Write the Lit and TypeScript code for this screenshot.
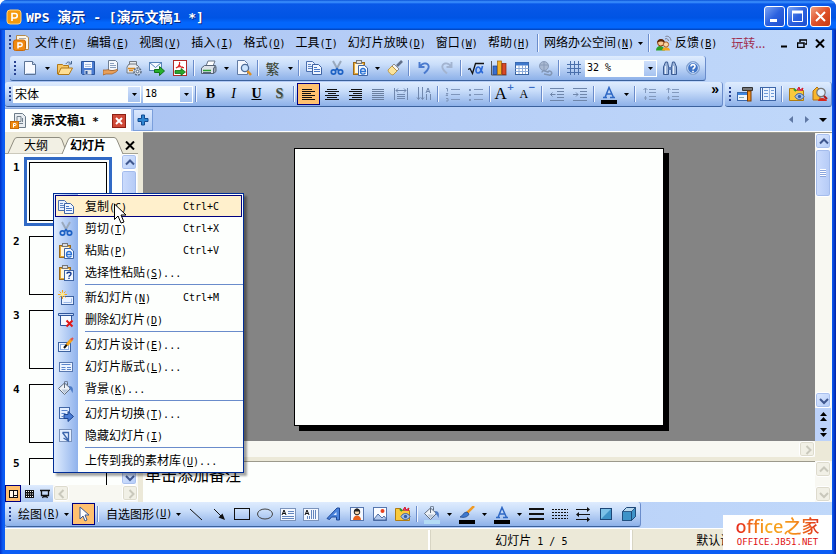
import { LitElement, html, css, svg, nothing, TemplateResult } from "lit";
import { customElement } from "lit/decorators.js";
import { classMap } from "lit/directives/class-map.js";

const lines = (d: string, color = "#111", w = 1) =>
  svg`<path d=${d} stroke=${color} stroke-width=${w} fill="none"/>`;

const board = svg`<rect x="1.500" y="2.500" width="11" height="12" fill="#e3a93c" stroke="#9a6a1c"/>
  <rect x="4.500" y=".5" width="5" height="3" fill="#ddd" stroke="#777"/>
  <rect x="3" y="4" width="8" height="9" fill="#fff6dc"/>`;

const icons: Record<string, TemplateResult> = {
  app: svg`<rect x="1" y="1" width="14" height="14" rx="3" fill="#f59a0c" stroke="#ffd27a"/><path d="M6 12V4.500h3a2.200 2.200 0 0 1 0 4.500H6" fill="none" stroke="#fff" stroke-width="1.600"/>`,
  doc: svg`<path d="M3.500.5h9l3 2v12h-12z" fill="#fdf7ea" stroke="#b48a4a"/><path d="M6 3.500h7" stroke="#aaa"/><rect x=".5" y="5" width="12" height="10.500" rx="2" fill="#f08a10" stroke="#c86a08"/><path d="M5 13.500V8h2.500a1.700 1.700 0 0 1 0 3.400H5" fill="none" stroke="#fff" stroke-width="1.500"/>`,
  docgray: svg`<path d="M4.500.5h8l3 3v11h-11z" fill="#e9eef2" stroke="#6d7c88"/><path d="M7 3.500h4v5H7zM7 10.500h6M12.500 5v4" stroke="#74828d" fill="none"/><rect x=".5" y="8.500" width="8" height="7" fill="#f08a10" stroke="#c86a08"/><path d="M3.500 14.500v-4H5a1 1 0 0 1 0 2H4" fill="none" stroke="#fff"/>`,
  new: svg`<path d="M2.500 1.500h8l3 3v10h-11z" fill="#f7faff" stroke="#5c7496"/><path d="M10.500 1.500v3h3" fill="#cddcf0" stroke="#5c7496"/><path d="M4 13.500h9" stroke="#b8cce8"/>`,
  open: svg`<path d="M.5 14v-9.500h5l1 1h5v3" fill="#f7c766" stroke="#b07818"/><path d="M1 14.500l3-6.500h11.500L12 14.500z" fill="#ffdf94" stroke="#b07818"/><path d="M9 4c1-2.500 3.500-2.500 5-.5M14.500 1v3h-3" fill="none" stroke="#47658f"/>`,
  save: svg`<path d="M1.500 1.500h13v13h-12l-1-1z" fill="#4a7bd0" stroke="#2b559c"/><rect x="4" y="2" width="8" height="6" fill="#f4f8ff"/><path d="M5 4.500h6M5 6.500h6" stroke="#a9bddc"/><rect x="4.500" y="10" width="7" height="4.500" fill="#d5deeb"/><rect x="5.500" y="11" width="2" height="3" fill="#2b559c"/>`,
  hand: svg`<path d="M5.500.5h7l2 2v8h-9z" fill="#f5f8fc" stroke="#6d7e94"/><path d="M7 3.500h4M7 5.500h6M7 7.500h6" stroke="#8ba0bd"/><path d="M0 10h3c3-1 4 1 7 .5l4-1c1 .5 0 2-1 2.500l-4 2H3l-3 1z" fill="#e8a05c" stroke="#a05a1c" stroke-width=".7"/>`,
  gearbox: svg`<path d="M3.500 4.500V1.500h7v4M1 13V7l2-3h7l3 3v6z" fill="#e8ebee" stroke="#727a84"/><path d="M2 8.500h7M3 10.500h4" stroke="#d9891e" stroke-width="1.500"/><circle cx="11.500" cy="11.500" r="3.500" fill="#c9d4e2" stroke="#5b6c84" stroke-width="1.500" stroke-dasharray="2 1"/><circle cx="11.500" cy="11.500" r="1.300" fill="#fff" stroke="#5b6c84"/>`,
  mail: svg`<rect x=".5" y="2.500" width="12" height="8" fill="#f5faff" stroke="#5683b8"/><path d="M.5 2.500l6 5 6-5" fill="none" stroke="#5683b8"/><path d="M5.500 9.500h5V6.500l5 4.500-5 4.500v-3h-5z" fill="#27b02c" stroke="#127218"/>`,
  pdf: svg`<rect x="1.500" y=".5" width="13" height="15" fill="#fff" stroke="#b02a2a"/><path d="M4 8c3-1 4-4 3.500-6M7 4c1 3 3 4 5 3.500M4 8c1-1 4-1.500 7-1" fill="none" stroke="#d22" stroke-width="1.200"/><path d="M3 10.500h6v-2l4.500 3.500L9 15.500v-2H3z" fill="#2aa52e" stroke="#0f6e15" stroke-width=".8"/>`,
  printer: svg`<path d="M5 6l2-5h7l-2 5" fill="#fff" stroke="#68768a"/><path d="M.5 8l3-2.500h11l-2 3v5H.5z" fill="#dde3ea" stroke="#566478"/><path d="M12.500 8.500l2.500-2v5l-2.500 2z" fill="#9faab8" stroke="#566478"/><path d="M2 10.500h8" stroke="#28a030" stroke-width="1.600"/><path d="M2 12.500h8" stroke="#566478"/>`,
  preview: svg`<path d="M1.500.5h7l3 3v11h-10z" fill="#f4f8ff" stroke="#617ba4"/><circle cx="9" cy="8" r="3.600" fill="#cbe4ff" stroke="#4c6b98" stroke-width="1.300"/><path d="M11.500 11l3.500 4" stroke="#e09020" stroke-width="2.500"/>`,
  copy: svg`<path d="M.5 1.500h6l2 2v8h-8z" fill="#e9f1ff" stroke="#4a6fae"/><path d="M2 4.500h3M2 6.500h4M2 8.500h4" stroke="#5f86c4"/><path d="M6.500 4.500h6l3 3v7h-9z" fill="#f0f6ff" stroke="#3e63a3"/><path d="M8 7.500h3M8 9.500h6M8 11.500h6" stroke="#4878c8"/>`,
  cut: svg`<path d="M4 1l5 9M12 1L7 10" stroke="#9aa9bd" stroke-width="2" fill="none"/><circle cx="4.500" cy="12" r="2.200" fill="none" stroke="#1e62c4" stroke-width="1.700"/><circle cx="11.500" cy="12" r="2.200" fill="none" stroke="#1e62c4" stroke-width="1.700"/><path d="M6.500 10.500l1.500-2 1.500 2" stroke="#1e62c4" stroke-width="1.500" fill="none"/>`,
  paste: svg`${board}<path d="M6.500 5.500h6l3 2.500v7.500h-9z" fill="#f4f9ff" stroke="#3f65a5"/><path d="M8.500 11.500h5c0-4-5-4-5 0s4 2.500 5 1.500" fill="none" stroke="#2b72d4" stroke-width="1.300"/>`,
  pasteq: svg`${board}<rect x="6.500" y="5.500" width="9" height="10" fill="#f4f9ff" stroke="#3f65a5"/><path d="M9 8.800c0-2 4-2 4 0s-2 1.500-2 3M11 12.800v1.200" fill="none" stroke="#153a90" stroke-width="1.400"/>`,
  brush: svg`<path d="M15 1l-5 5" stroke="#61708a" stroke-width="2.600"/><path d="M7 4l5 5-2 2-5-5z" fill="#f3f3f3" stroke="#777" stroke-width=".8"/><path d="M5 6l5 5-4 4c-2 0-5-3-5-5z" fill="#fbe39a" stroke="#b58a30" stroke-width=".8"/>`,
  undo: svg`<path d="M3.500 2v5h5M4 6.500C7 1.500 14 3 12.500 8c-.7 2.500-3 4-4.500 5.500" fill="none" stroke="#4a7ace" stroke-width="1.900"/>`,
  redo: svg`<path d="M12.500 2v5h-5M12 6.500C9 1.500 2 3 3.500 8c.7 2.500 3 4 4.500 5.500" fill="none" stroke="#a3b4d0" stroke-width="1.900"/>`,
  root: svg`<path d="M0 9.500l2-1 2.500 5L7.500 3.500H16" fill="none" stroke="#111" stroke-width="1.300"/><path d="M14.500 6c-1 5-2.500 7-4.500 7-3 0-2.500-6 .5-6 2 0 2.500 5 4.500 6" fill="none" stroke="#2a68d8" stroke-width="1.600"/>`,
  chart: svg`<path d="M.5 1v14H15.500" fill="none" stroke="#555"/><rect x="2" y="6" width="4" height="8.500" fill="#3a70d0" stroke="#1d3f86" stroke-width=".7"/><rect x="6.500" y="1" width="4" height="13.500" fill="#f5b024" stroke="#9a6208" stroke-width=".7"/><rect x="11" y="3.500" width="4" height="11" fill="#d84a28" stroke="#8a2008" stroke-width=".7"/>`,
  table: svg`<rect x="1.500" y="2.500" width="13" height="12" fill="#fff" stroke="#37619f"/><path d="M1.500 4h13" stroke="#3e78cc" stroke-width="3"/><path d="M1.500 8.500h13M1.500 11.500h13M5 5v9M8.500 5v9M11.500 5v9" stroke="#8dacda"/>`,
  link: svg`<circle cx="7" cy="6" r="4.500" fill="#a9b9d2" stroke="#8a9cb9"/><path d="M3 5h8M7 2v8" stroke="#8a9cb9"/><path d="M5 12.500a2 2 0 0 1 3-1.500l3 1a2 2 0 1 1 1 3l-5-1" fill="none" stroke="#8296b5" stroke-width="1.500"/>`,
  grid: lines("M4.500 1v14M8.500 1v14M12.500 1v14M1 4.500h14M1 8.500h14M1 12.500h14", "#4a70ac"),
  find: svg`<path d="M1.500 7l2-5h2l1 5v7.500h-5zM14.500 7l-2-5h-2l-1 5v7.500h5z" fill="#9cb4d8" stroke="#3a5a92"/><path d="M6.500 7h3v3h-3z" fill="#5f80b8"/><path d="M3.500 6v8M11.500 6v8" stroke="#e4eefc"/>`,
  help: svg`<circle cx="8" cy="8" r="6.500" fill="#3f74c6" stroke="#8fa9d0"/><circle cx="8" cy="8" r="5.400" fill="none" stroke="#d3e4fb"/><path d="M6 6.500c0-2.500 4-2.500 4 0 0 1.500-2 1.500-2 3M8 10.800v1.400" fill="none" stroke="#fff" stroke-width="1.600"/>`,
  left: lines("M1 3.500h10M1 5.500h13M1 7.500h9M1 9.500h13M1 11.500h10M1 13.500h13"),
  center: lines("M3 3.500h10M1 5.500h14M4 7.500h8M1 9.500h14M3 11.500h10M1 13.500h14"),
  right: lines("M4 3.500h11M2 5.500h13M6 7.500h9M2 9.500h13M5 11.500h10M2 13.500h13"),
  justify: lines("M2 3.500h12M2 5.500h12M2 7.500h12M2 9.500h12M2 11.500h12M2 13.500h12", "#6a7f9f"),
  spread: lines("M1.500 2v12M14.500 2v12M3 4.500h10M5 2.500l-2 2 2 2M11 2.500l2 2-2 2M4 8.500h8M4 10.500h8M4 12.500h8", "#7188ae"),
  vert: lines("M2.500 1v12M6.500 1v12M1 11.500l1.500 2 1.500-2M5 11.500l1.500 2 1.500-2M10.500 8v6M14.500 8v6M10 7l2-5 2 5M11 5.500h2", "#7188ae"),
  numbers: lines("M6 3.500h9M6 8.500h9M6 13.500h9M1 2.500h1.500v3M1 7.500h2l-2 2h2M1 12.500h2v2.500h-2", "#7f96bb"),
  bullets: svg`${lines("M6 3.500h9M6 8.500h9M6 13.500h9", "#7f96bb")}<path d="M1 3h2v2H1zM1 8h2v2H1zM1 13h2v2H1z" fill="#7f96bb"/>`,
  outdent: lines("M1 2.500h14M8 5.500h7M8 8.500h7M8 11.500h7M1 14.500h14M1.500 8.500h5M3.500 6.500l-2 2 2 2", "#6f86aa"),
  indent: lines("M1 2.500h14M8 5.500h7M8 8.500h7M8 11.500h7M1 14.500h14M1 8.500h5M4 6.500l2 2-2 2", "#6f86aa"),
  spacing: lines("M7 3.500h7M7 6.500h7M7 10.500h7M7 13.500h7M3.500 2v5M1.500 4l2-2 2 2M3.500 14v-4M2 12h3", "#8299bd"),
  hammer: svg`<rect x=".5" y="6.500" width="11" height="8" fill="#eef5ff" stroke="#3a68ac"/><path d="M1 8h10" stroke="#3e86e0" stroke-width="2"/><path d="M2 11.500h5" stroke="#8aa"/><path d="M5.500 1.500h10v3h-10z" fill="#777" stroke="#333"/><rect x="10.500" y="5" width="3.500" height="10" fill="#f0901c" stroke="#7a3c04"/>`,
  pane: svg`<rect x=".5" y="1.500" width="15" height="13" fill="#eaf3ff" stroke="#3d66a8"/><path d="M2.500 2v12" stroke="#3d66a8"/><path d="M9.500 2v12" stroke="#9ab7e2"/><path d="M4 4.500h4M4 7.500h4M4 10.500h4M11 4.500h3M11 7.500h3M11 10.500h3" stroke="#6f9bd8"/>`,
  gallery: svg`<path d="M.5 14.500v-12h5l1 2h8v10z" fill="#f9ca3c" stroke="#b07c10"/><path d="M8 4l2-3 1 3 3-2-1 3" fill="#e22c9a" stroke="#d42020"/><path d="M5 3l2 2" stroke="#2a9a2a" stroke-width="2"/><path d="M6 10.500c2-4 7-4 9 0-2 4-7 4-9 0z" fill="#a8c4ea" stroke="#3c62a2"/><circle cx="10.500" cy="10.500" r="1.700" fill="#315da6"/>`,
  user: svg`<path d="M1 14V5l4-4 3 3v10z" fill="#f9b62c" stroke="#b07010"/><path d="M6 15c0-4 8-4 9 0z" fill="#d8281c"/><circle cx="9" cy="6.500" r="4.200" fill="#dcedff" stroke="#777" stroke-width="1.200"/><path d="M12 10l3 3" stroke="#b01818" stroke-width="2"/>`,
  people: svg`<path d="M0 15.500c0-6 8-6 9 0z" fill="#2ba02a"/><circle cx="4.800" cy="7.800" r="3.200" fill="#f9c890" stroke="#8a3c10"/><path d="M1 8c0-5.500 8-5.500 8 0-2-2-6-2-8 0z" fill="#5a2408"/><path d="M6 15.500c0-4.500 8-4.500 8 0z" fill="#f5a51c"/><circle cx="10" cy="9.500" r="2.600" fill="#fbd5a4" stroke="#a86028"/><path d="M9 4c2-1 3 0 3.500 2M9.500 1.500c3-1 5 1 5.500 4" fill="none" stroke="#778"/>`,
  newslide: svg`<rect x="3.500" y="6.500" width="12" height="8" fill="#eaf2ff" stroke="#3d62a0"/><path d="M5.500 12.500h8v-4" fill="none" stroke="#9cb9e8"/><path d="M4.500 0v9M0 4.500h9M1.500 1.500l6 6M7.500 1.500l-6 6" stroke="#f7a51c"/><circle cx="4.500" cy="4.500" r="2" fill="#ffe98a"/>`,
  delslide: svg`<path d="M.5 1.500h15v2H.5z" fill="#c8dcfa" stroke="#2f569c"/><path d="M2.500 3.500v10h8M13.500 3.500v5" fill="none" stroke="#2f569c"/><path d="M3 4h10v9H3z" fill="#f6faff"/><path d="M8.500 8.500l6 6M14.500 8.500l-6 6" stroke="#e01818" stroke-width="2"/>`,
  design: svg`<rect x=".5" y="5.500" width="12" height="9" fill="#eaf2ff" stroke="#3d62a0"/><rect x="2.500" y="7.500" width="8" height="5" fill="#fff" stroke="#8fb0e4"/><path d="M6 11l6-7" stroke="#111" stroke-width="2"/><path d="M9 8l5-6" stroke="#f7a51c" stroke-width="3"/><path d="M13 3l2-2" stroke="#e05050" stroke-width="2"/>`,
  layout: svg`<rect x="1.500" y="3.500" width="13" height="9" fill="#edf4ff" stroke="#5878b0"/><path d="M3.500 5.500h9M3.500 8.500h4M9 8.500h4M3.500 10.500h4M9 10.500h4" stroke="#5c86cc"/>`,
  bucket: svg`<path d="M6.500 2l6 5.500-6 6-6-6z" fill="#eef2f7" stroke="#5f6d80"/><path d="M3.500 8.500h7l-4 4z" fill="#b9c7da"/><path d="M6.500 7V1.500a1.500 1.500 0 0 1 3 0V4" fill="none" stroke="#5f6d80"/><path d="M11 5c4 0 4.500 3 3.500 7-1-1.500-1-3-3-4z" fill="#4c7ac4"/>`,
  transition: svg`<rect x="1.500" y="1.500" width="10" height="11" fill="#e3eeff" stroke="#4166a6"/><path d="M3.500 4.500h6M3.500 7.500h4M3.500 10.500h2" stroke="#5c86cc"/><path d="M6 8.500h4V5.500l5.500 5-5.500 5v-3H6z" fill="#4a7cd4" stroke="#1d448e"/>`,
  hide: svg`<rect x="1.500" y="1.500" width="12" height="12" fill="#e3eeff" stroke="#7b93bb"/><path d="M4.500 4.500h6v6M4.500 4.500l6 8M10.500 5v8l-5-3" fill="none" stroke="#3d66ac" stroke-width="1.300"/>`,
  pointer: svg`<path d="M4 1v12l3-3 2 5 2-1-2-5h4z" fill="#fff" stroke="#3b5992"/>`,
  line: lines("M2 3l12 11"),
  arrow: svg`<path d="M3 3l7 7" stroke="#111"/><path d="M14 14l-6.500-2.500 4-4z" fill="#111"/>`,
  rect: svg`<rect x=".5" y="2.500" width="15" height="11" fill="none" stroke="#111"/>`,
  oval: svg`<ellipse cx="8" cy="8" rx="7.500" ry="5" fill="none" stroke="#444"/>`,
  textbox: svg`<rect x=".5" y="2.500" width="15" height="12" fill="#f4f8ff" stroke="#7b93bb"/><path d="M2 9l2-5 2 5M3 7.500h2" stroke="#111" fill="none"/><path d="M8 5.500h6M8 7.500h6M2 10.500h12M2 12.500h12" stroke="#6486be"/>`,
  vtextbox: svg`<rect x=".5" y="2.500" width="15" height="12" fill="#f4f8ff" stroke="#7b93bb"/><path d="M2 9l2-5 2 5M3 7.500h2" stroke="#111" fill="none"/><path d="M8.500 4v9M10.500 4v9M12.500 4v9M6.500 10v3M4.500 10v3" stroke="#6486be"/>`,
  wordart: svg`<path d="M1 12.500L11 2h2.500v12h-3v-3H5.500L3.500 13.500z" fill="#4b83dc" stroke="#1d4898"/><path d="M7.500 9H10.500V6z" fill="#dce9ff"/>`,
  clip: svg`<rect x="1.500" y="1.500" width="13" height="13" fill="#f4f8ff" stroke="#5676ae"/><circle cx="8" cy="6" r="2.800" fill="#fad9b0" stroke="#222"/><path d="M5 5.500c0-4 6-4 6 0z" fill="#222"/><path d="M4 14c0-6 8-6 8 0z" fill="#e8601c"/>`,
  picture: svg`<rect x="1.500" y="1.500" width="13" height="13" fill="#fafcff" stroke="#5676ae"/><circle cx="10.500" cy="5" r="2" fill="#e8401c"/><path d="M2 13l4-5 4 4 2-2 2 2.500V14H2z" fill="#b4caee" stroke="#33568f" stroke-width=".8"/>`,
  paint: svg`<path d="M15 0l-7 7" stroke="#f09a24" stroke-width="2.500"/><path d="M8 6l2 2c-1 3-5 4-9 3 3-1 3-5 7-5z" fill="#3f78ce" stroke="#1c407e" stroke-width=".7"/>`,
  fontcolor: svg`<path d="M2 11.500h4M9 11.500h5M4 11.500l4-10 4.500 10M5.500 8h5.500" stroke="#2f68c4" fill="none" stroke-width="1.500"/>`,
  weights: svg`<path d="M0 3h15M0 8h15M0 13h15" stroke="#111" stroke-width="2"/>`,
  dashes: svg`<path d="M0 3.500h16M0 6.500h16M0 9.500h16M0 12.500h16" stroke="#111" stroke-dasharray="2 1"/>`,
  arrows: svg`<path d="M1 3.500h13M2 8.500h13M1 13.500h13" stroke="#111"/><path d="M12 1l3 2.500L12 6zM4 6L1 8.500 4 11zM12 11l3 2.500-3 2.500z" fill="#111"/>`,
  shadow: svg`<rect x="2.500" y="2.500" width="11" height="11" fill="#3e93c8" stroke="#1d4777"/><path d="M3 13V3h10z" fill="#7cc1e8"/>`,
  cube: svg`<path d="M1.500 5.500l4-4h9v9l-4 4h-9z" fill="#b9d9ee" stroke="#1d4777"/><path d="M10.500 5.500h-9v9h9zM10.500 5.500l4-4v9l-4 4z" fill="#3e93c8" stroke="#1d4777" stroke-width=".8"/>`,
  normal: svg`<path d="M4.500 4.500h8v7h-8z" fill="#fff8e8" stroke="#111"/><path d="M8.500 4.500v7M8.500 9.500h4" stroke="#111"/><path d="M4 4h1v8H4zM12 4h1v8h-1zM4 11h9v1H4z" fill="#111"/>`,
  sorter: svg`<rect x="4" y="4" width="9" height="8" fill="#111"/><path d="M5 5.500h7M5 8h7M5 10.500h7" stroke="#fff" stroke-dasharray="1 1"/>`,
  show: svg`<path d="M3 4.500h10M4.500 5v4.500h7V5M8 9.500v2M5.500 12l1-1.500h3l1 1.500" fill="none" stroke="#111" stroke-width="1.300"/>`,
  plus: svg`<path d="M6.500 3h3v3.500H13v3H9.500V13h-3V9.500H3v-3h3.500z" fill="#2e86d2" stroke="#124c92"/>`,
};

const icon = (name: string) =>
  html`<svg class="icon" viewBox="0 0 16 16" aria-hidden="true">${icons[name]}</svg>`;

const caret = html`<svg class="caret" viewBox="0 0 5 3" aria-hidden="true"><path d="M0 0h5L2.500 3z" fill="#000" /></svg>`;

const key = (k?: string, tail = "") =>
  k ? html`<span class="latin">(<u>${k}</u>)${tail}</span>` : nothing;

type Tool = string;
const standard: Tool[] = ["new", "v", "open", "save", "hand", "gearbox", "mail", "pdf", "|", "printer", "v", "preview", "|",
  "#繁", "v", "|", "copy", "cut", "paste", "v", "brush", "|", "undo", "redo", "|", "root", "chart", "table", "link", "|", "grid"];
const formatting: Tool[] = ["|", "#B", "#I", "#U", "#S", "|", "*left", "center", "right", "justify", "spread", "vert", "|",
  "numbers", "bullets", "|", "#A+", "#A-", "|", "outdent", "indent", "|", "_fontcolor", "v", "|", "spacing", "spacing"];
const drawing: Tool[] = ["line", "arrow", "rect", "oval", "textbox", "vtextbox", "wordart", "clip", "picture", "gallery", "|",
  "~bucket", "v", "_paint", "v", "_fontcolor", "v", "weights", "dashes", "arrows", "shadow", "cube"];

const glyphs: Record<string, TemplateResult> = {
  "繁": html`<span class="fan">繁</span>`,
  B: html`<b class="serif">B</b>`,
  I: html`<i class="serif thin">I</i>`,
  U: html`<u class="serif">U</u>`,
  S: html`<span class="serif dim">S</span>`,
  "A+": html`<span class="serif big">A</span><sup>+</sup>`,
  "A-": html`<span class="serif small">A</span><sup>−</sup>`,
};

function tool(t: Tool) {
  if (t === "|") return html`<span class="sep"></span>`;
  if (t === "v") return html`<button class="drop" aria-label="More">${caret}</button>`;
  if (t[0] === "#") return html`<button class="tool" aria-label=${t.slice(1)}>${glyphs[t.slice(1)]}</button>`;
  const flag = t[0];
  const name = t.replace(/^[*_~]/, "");
  const cls = { tool: true, on: flag === "*", swatch: flag === "_" || flag === "~", pale: flag === "~" };
  return html`<button class=${classMap(cls)} aria-label=${name}>${icon(name)}</button>`;
}

const combo = (label: string, value: string, cls: string) => html`
  <label class="combo ${cls}">
    <select aria-label=${label}><option>${value}</option></select>
    <span class="combo-arrow">${caret}</span>
  </label>`;

const chevrons: Record<string, string> = {
  up: "M4 9.500l4-4 4 4",
  down: "M4 6l4 4 4-4",
  left: "M9.500 4l-4 4 4 4",
  right: "M6.500 4l4 4-4 4",
};
const scroll = (dir: string, off = false) => html`
  <button class="sb ${off ? "off" : ""}" aria-label=${"Scroll " + dir} ?disabled=${off}>
    <svg class="icon" viewBox="0 0 16 16"><path d=${chevrons[dir]} fill="none" stroke="currentColor" stroke-width="2" /></svg>
  </button>`;

const menus: [string, string][] = [["文件", "F"], ["编辑", "E"], ["视图", "V"], ["插入", "I"], ["格式", "O"], ["工具", "T"],
  ["幻灯片放映", "D"], ["窗口", "W"], ["帮助", "H"]];

interface Item { icon?: string; text: string; key: string; dots?: boolean; cut?: string; hot?: boolean }
const popup: Item[][] = [
  [
    { icon: "copy", text: "复制", key: "C", cut: "Ctrl+C", hot: true },
    { icon: "cut", text: "剪切", key: "T", cut: "Ctrl+X" },
    { icon: "paste", text: "粘贴", key: "P", cut: "Ctrl+V" },
    { icon: "pasteq", text: "选择性粘贴", key: "S", dots: true },
  ],
  [
    { icon: "newslide", text: "新幻灯片", key: "N", cut: "Ctrl+M" },
    { icon: "delslide", text: "删除幻灯片", key: "D" },
  ],
  [
    { icon: "design", text: "幻灯片设计", key: "E", dots: true },
    { icon: "layout", text: "幻灯片版式", key: "L", dots: true },
    { icon: "bucket", text: "背景", key: "K", dots: true },
  ],
  [
    { icon: "transition", text: "幻灯片切换", key: "T", dots: true },
    { icon: "hide", text: "隐藏幻灯片", key: "I" },
  ],
  [{ text: "上传到我的素材库", key: "U", dots: true }],
];

@customElement("app-root")
export class AppRoot extends LitElement {
  static styles = css`
    :host {
      display: block;
      font: 12px/16px "Noto Sans CJK SC", "Noto Sans", sans-serif;
      color: #000;
    }
    * { box-sizing: border-box; }
    button, select { font: inherit; color: inherit; border: 0; padding: 0; margin: 0; background: none; }
    .latin { font-family: "DejaVu Sans Mono", monospace; font-size: 10px; }
    .icon { width: 16px; height: 16px; display: block; flex: none; }
    .caret { width: 5px; height: 3px; display: block; }

    .win {
      position: relative;
      display: flex;
      flex-direction: column;
      height: 100vh;
      padding: 0 4px 4px 5px;
      background: linear-gradient(90deg, #0030c8, #0b5cf4 3px, #0b5cf4 calc(100% - 4px), #0020a8);
      border-radius: 7px 7px 0 0;
      overflow: hidden;
    }
    .title {
      flex: none;
      height: 30px;
      margin: 0 -4px 0 -5px;
      padding: 3px 5px 0 6px;
      display: flex;
      align-items: center;
      gap: 4px;
      color: #fff;
      font-size: 14px;
      font-weight: 700;
      text-shadow: 1px 1px #0a2a80;
      background: linear-gradient(#0a52d8, #3f94ff 2px, #0958e8 4px, #0054e4 60%, #0366fc 75%, #0366fc 92%, #0140b8);
    }
    .title h1 { flex: 1; margin: 0; font-size: inherit; white-space: pre; }
    .title .latin { font-size: 13px; }
    .title button {
      width: 21px; height: 21px;
      border: 1px solid #fff;
      border-radius: 3px;
      background: linear-gradient(135deg, #7ba4f4, #2c61df 50%, #1d4fd0);
      margin-left: -2px;
      display: grid;
      place-items: center;
    }
    .title .x { background: linear-gradient(135deg, #f0a080, #e0512a 50%, #c63a10); }

    .menubar, .row { background: linear-gradient(90deg, #a5c0f0, #b4ccf6 40%, #c0d8fa); flex: none; height: 26px; display: flex; }
    .menubar { align-items: center; padding-right: 3px; }
    .menubar button { white-space: nowrap; }
    .mi { padding: 0 5px; height: 22px; }
    .mi.wide { padding: 0 0 0 3px; }
    .doc { margin: 0 1px 0 0; }
    .space { flex: 1; }
    .fun { color: #a03050; padding: 0 10px; }
    .fb { display: flex; align-items: center; gap: 3px; padding: 0 4px; }
    .mdi { width: 18px; height: 16px; display: grid; place-items: center; }

    .grip {
      width: 8px;
      flex: none;
      align-self: stretch;
      margin: 5px 0;
      background:
        linear-gradient(90deg, transparent 4px, #27418f 4px, #27418f 6px, transparent 6px);
      -webkit-mask: linear-gradient(#000 2px, transparent 2px) 0 0 / 8px 4px;
      mask: linear-gradient(#000 2px, transparent 2px) 0 0 / 8px 4px;
    }
    .sep {
      width: 6px;
      flex: none;
      align-self: stretch;
      margin: 4px 0;
      background: linear-gradient(90deg, transparent 2px, #6a8ccb 2px, #6a8ccb 3px, #f1f6ff 3px, #f1f6ff 4px, transparent 4px);
    }
    .bar {
      display: flex;
      align-items: center;
      height: 25px;
      border-radius: 3px;
      border-bottom: 1px solid #3b619c;
      border-right: 1px solid #6a8ccb;
      background: linear-gradient(#dfecfe, #cadefa 35%, #a9c5f0 70%, #8db1e9);
    }
    .indent { margin-left: 5px; padding-right: 1px; }
    .grow { flex: 1; }
    .side { margin-left: 2px; }
    .more { margin-left: auto; align-self: flex-start; font: 700 14px/14px "Liberation Sans", sans-serif; padding-right: 3px; }
    .tool, .drop { height: 22px; display: flex; align-items: center; justify-content: center; flex: none; position: relative; }
    .tool { width: 23px; }
    .drop { width: 12px; }
    .tool.on { background: #ffc06f; border: 1px solid #000080; }
    .swatch::after { content: ""; position: absolute; left: 4px; right: 3px; bottom: 1px; height: 4px; background: #000; }
    .pale::after { background: #b4dcf4; }
    .serif { font-family: "Liberation Serif", serif; font-size: 14px; font-weight: 700; }
    .thin { font-weight: 400; }
    .dim { color: #404a40; text-shadow: 1px 1px #8a9a98; }
    .big { font-size: 17px; font-weight: 400; -webkit-text-stroke: 0; }
    .small { font-size: 12px; font-weight: 400; }
    .fan { font-family: "Noto Sans CJK SC", sans-serif; font-size: 14px; color: #37412e; }
    sup { font: 700 9px/9px "DejaVu Sans", sans-serif; color: #3a6cc4; align-self: flex-start; }
    .label { display: flex; align-items: center; height: 22px; padding-left: 5px; white-space: nowrap; }

    .combo { display: flex; height: 17px; background: #fdfffd; flex: none; }
    .combo select { appearance: none; flex: 1; min-width: 0; padding-left: 2px; line-height: 16px; height: 17px; }
    .combo-arrow { width: 12px; margin: 1px; display: grid; place-items: center; background: linear-gradient(#cfe0fb, #a6c3f0); }
    .font { width: 128px; margin-right: 2px; }
    .size { width: 50px; }
    .zoom { width: 72px; margin-right: 1px; }
    .size select, .zoom select { font: 10px/16px "DejaVu Sans Mono", monospace; }

    .tabs { height: 23px; align-items: stretch; padding-right: 5px; }
    .tab { display: flex; align-items: center; gap: 5px; width: 126px; padding: 2px 5px 0; background: #fdfffd; font-weight: 700; border-top: 1px solid #8aa8dc; white-space: pre; }
    .tab .latin { font-size: 11px; }
    .close { width: 14px; height: 14px; margin-left: auto; background: #cf4a38; border: 1px solid #8c2014; display: grid; place-items: center; }
    .add { width: 20px; margin: 1px 0 0 2px; border: 1px solid #7b9fdc; background: linear-gradient(#dbe8fd, #b2ccf5); display: grid; place-items: center; }
    .tabnav { display: flex; align-items: center; gap: 10px; margin-left: auto; }
    .tabnav button { display: grid; place-items: center; }

    .body { flex: 1; min-height: 0; display: flex; background: #ece9d8; border-top: 1px solid #fff; }
    .panel { width: 133px; flex: none; display: flex; flex-direction: column; margin-right: 5px; }
    .heads { height: 22px; flex: none; position: relative; display: flex; align-items: center; padding-top: 4px; }
    .heads svg.shape { position: absolute; inset: 0; width: 133px; height: 22px; }
    .heads button { position: relative; }
    .h1 { margin-left: 19px; }
    .h2 { margin-left: 22px; font-weight: 700; }
    .hx { margin-left: auto; margin-right: 3px; }
    .slides { flex: 1; min-height: 0; display: flex; background: #fdfffd; }
    ol { flex: 1; margin: 0; padding: 3px 0 0; list-style: none; overflow: hidden; }
    li { display: flex; margin-bottom: 5px; }
    .num { width: 19px; padding-left: 8px; font: 700 11px/16px "DejaVu Sans Mono", monospace; margin-top: 3px; }
    .thumb { width: 88px; height: 69px; border: 3px solid transparent; padding: 2px; }
    .thumb.sel { border-color: #316ac5; }
    .thumb span { display: block; height: 100%; border: 1px solid #000; background: #fdfffd; }
    .vs { width: 17px; flex: none; display: flex; flex-direction: column; background: #f8f8f2; padding: 0 1px 0 0; }
    .hs { display: flex; flex: 1; background: #f8f8f2; justify-content: space-between; }
    .sb { width: 16px; height: 16px; flex: none; border: 1px solid #fff; border-radius: 3px; background: linear-gradient(135deg, #dce8ff, #b4ccf8); color: #40588f; display: grid; place-items: center; box-shadow: inset 0 0 0 1px #a9c0ee; }
    .sb.off { background: #f1f0e6; color: #c9c8bc; box-shadow: inset 0 0 0 1px #dddbcd; }
    .knob { width: 16px; border: 1px solid #fff; border-radius: 3px; background: linear-gradient(90deg, #ccdcfd, #b4caf6); box-shadow: inset 0 0 0 1px #a4bcec; display: grid; place-items: center; }
    .knob.short { height: 48px; }
    .knob.long { height: 200px; }
    .knob i { width: 6px; height: 8px; background: repeating-linear-gradient(#fff, #fff 1px, #8ba6dd 1px, #8ba6dd 2px); }
    .end { margin-top: auto; }
    .views { height: 17px; flex: none; display: flex; background: linear-gradient(#dfecfe, #a9c5f0); }
    .views .v { width: 16px; display: grid; place-items: center; overflow: hidden; }
    .views .v.on { background: #ffc06f; box-shadow: inset 0 0 0 1px #000080; }

    .main { flex: 1; min-width: 0; display: flex; flex-direction: column; border-top: 1px solid #9a9a90; }
    .stage { flex: 1; min-height: 0; display: flex; }
    .canvas { flex: 1; display: flex; align-items: center; justify-content: center; background: #848484; }
    .slide { height: 90%; aspect-ratio: 4 / 3; background: #fdfffd; border: 1px solid #000; box-shadow: 5px 5px #000; }
    .pager { height: 33px; flex: none; background: #bcd2fa; display: flex; flex-direction: column; justify-content: space-around; align-items: center; }
    .pager button { display: block; height: 9px; }
    .pager svg { display: block; }
    .hrow { height: 16px; flex: none; display: flex; justify-content: flex-end; background: #f8f8f2; border-right: 17px solid #ece9d8; }
    .notes { height: 45px; flex: none; display: flex; border-top: 4px solid #ece9d8; background: #fdfffd; }
    .notes textarea { flex: 1; border: 0; border-top: 1px solid #9c9a8c; resize: none; outline: 0; margin: 0; padding: 0 2px; font: 16px/24px "Noto Sans CJK SC", sans-serif; background: #fdfffd; color: #000; overflow: hidden; }

    .draw { height: 26px; }
    .status { flex: none; height: 22px; display: flex; background: #ece9d8; border-top: 1px solid #fff; padding-top: 1px; white-space: pre; }
    .cell { border-right: 2px solid #fff; margin-right: 2px; line-height: 20px; box-shadow: 1px 0 #d8d5c4; min-width: 0; }
    .c1 { flex: 424; }
    .c2 { flex: 198; text-align: center; }
    .c3 { flex: 198; text-indent: 62px; border: 0; box-shadow: none; margin: 0; }

    .popup {
      position: absolute;
      left: 53px;
      top: 193px;
      width: 191px;
      padding: 1px;
      border: 1px solid #002d96;
      background: linear-gradient(90deg, #dfecfe, #8fb2ec 24px, #fdfffd 24px);
      box-shadow: 3px 3px 2px rgba(0, 0, 0, 0.35);
    }
    .popup hr { height: 1px; margin: 1px -1px 1px 30px; border: 0; background: #6a8ccb; }
    .item { display: flex; align-items: center; width: 100%; height: 22px; padding: 1px 2px 0; text-align: left; border: 1px solid transparent; }
    .item.hot { background: #fff0cc; border-color: #000080; }
    .item .ico { width: 27px; flex: none; }
    .item .txt { flex: 1; white-space: nowrap; }
    .item .cut { width: 56px; }

    .cursor { position: absolute; left: 114px; top: 203px; width: 13px; height: 21px; }
    .brand { position: absolute; right: 4px; bottom: 4px; width: 109px; height: 35px; background: #fff; text-align: center; }
    .brand strong {
      display: block;
      font: 500 18px/23px "Noto Sans", "Noto Sans CJK SC", sans-serif;
      font-variant-ligatures: none;
      background: linear-gradient(90deg, #e8301c 15%, #f7a81c 40%, #f5901c 65%, #e03a1c 85%);
      -webkit-background-clip: text;
      background-clip: text;
      color: transparent;
    }
    .brand small { display: block; font: 9px/9px "DejaVu Sans Mono", monospace; color: #e01010; }
  `;

  private item(i: Item) {
    return html`<button role="menuitem" class=${classMap({ item: true, hot: !!i.hot })}>
      <span class="ico">${i.icon ? icon(i.icon) : nothing}</span>
      <span class="txt">${i.text}${key(i.key, i.dots ? "..." : "")}</span>
      ${i.cut ? html`<span class="cut latin">${i.cut}</span>` : nothing}
    </button>`;
  }

  private pageButton(d: string, label: string) {
    return html`<button aria-label=${label}><svg width="7" height="9" viewBox="0 0 7 9"><path d=${d} /></svg></button>`;
  }

  render() {
    return html`
      <div class="win">
        <header class="title">
          ${icon("app")}
          <h1><span class="latin">WPS </span>演示<span class="latin"> - [</span>演示文稿<span class="latin">1 *]</span></h1>
          <button aria-label="Minimize"><svg width="15" height="15"><path d="M3 11.500h7" stroke="#fff" stroke-width="3" /></svg></button>
          <button aria-label="Maximize"><svg width="15" height="15"><path d="M2.500 3v9.500h10V3M2 3h11" stroke="#fff" stroke-width="1" fill="none" /><path d="M2 3h11" stroke="#fff" stroke-width="3" /></svg></button>
          <button class="x" aria-label="Close"><svg width="15" height="15"><path d="M3 3l9 9M12 3l-9 9" stroke="#fff" stroke-width="2" /></svg></button>
        </header>

        <nav class="menubar" aria-label="菜单">
          <span class="grip"></span><span class="doc">${icon("doc")}</span>
          ${menus.map(([t, k]) => html`<button class="mi">${t}${key(k)}</button>`)}
          <span class="sep"></span>
          <button class="mi wide">网络办公空间${key("N")}</button>
          <button class="drop" aria-label="More">${caret}</button>
          <span class="sep"></span>
          <button class="fb">${icon("people")}<span>反馈${key("B")}</span></button>
          <button class="fun">玩转...</button>
          <span class="space"></span>
          <button class="mdi" aria-label="Minimize"><svg width="9" height="9"><path d="M1 7.500h6" stroke="#000" stroke-width="2" /></svg></button>
          <button class="mdi" aria-label="Restore"><svg width="10" height="9"><path d="M3 3V1h7v4H8M0 4h7v4.500H.5V4" fill="none" stroke="#000" stroke-width="1.500" /></svg></button>
          <button class="mdi" aria-label="Close"><svg width="10" height="9"><path d="M1 .5l8 8M9 .5l-8 8" stroke="#000" stroke-width="2" /></svg></button>
        </nav>

        <div class="row">
          <div class="bar indent" role="toolbar" aria-label="常用">
            <span class="grip"></span>${standard.map(tool)}
            ${combo("显示比例", "32 %", "zoom")}
            ${tool("find")}${tool("help")}
          </div>
        </div>
        <div class="row">
          <div class="bar grow" role="toolbar" aria-label="格式">
            <span class="grip"></span>
            ${combo("字体", "宋体", "font")}${combo("字号", "18", "size")}
            ${formatting.map(tool)}
            <button class="more" aria-label="More">»</button>
          </div>
          <div class="bar side" role="toolbar" aria-label="其他">
            <span class="grip"></span>${["hammer", "pane", "|", "gallery", "user"].map(tool)}
          </div>
        </div>

        <div class="row tabs">
          <div class="tab">
            ${icon("docgray")}<span>演示文稿<span class="latin">1 *</span></span>
            <button class="close" aria-label="Close tab"><svg width="8" height="8"><path d="M1 1l6 6M7 1L1 7" stroke="#fff" stroke-width="2" /></svg></button>
          </div>
          <button class="add" aria-label="New tab">${icon("plus")}</button>
          <div class="tabnav">
            <button aria-label="Previous"><svg width="5" height="7"><path d="M4 0v7L0 3.500z" fill="#5f78a4" /></svg></button>
            <button aria-label="Next"><svg width="5" height="7"><path d="M1 0v7l4-3.500z" fill="#5f78a4" /></svg></button>
            <button aria-label="List"><svg width="8" height="4"><path d="M0 0h8L4 4z" /></svg></button>
          </div>
        </div>

        <div class="body">
          <aside class="panel">
            <div class="heads">
              <svg class="shape" viewBox="0 0 133 22" aria-hidden="true">
                <path d="M0 21.500H133" stroke="#a5a393" />
                <path d="M3 21.500L9 8q1-2.500 3-2.500H54q2 0 3 2.500l5 13.500" fill="#f2f0e4" stroke="#8f8d80" />
                <path d="M57 22L63 8q1-2.500 3-2.500h43q2 0 3 2.500l6 14" fill="#fdfffd" stroke="#8f8d80" />
              </svg>
              <button class="h1">大纲</button><button class="h2">幻灯片</button>
              <button class="hx" aria-label="Close panel"><svg width="10" height="9"><path d="M1 .5l8 8M9 .5l-8 8" stroke="#000" stroke-width="2" /></svg></button>
            </div>
            <div class="slides">
              <ol>
                ${[1, 2, 3, 4, 5].map((n) => html`<li><span class="num">${n}</span>
                  <button class=${classMap({ thumb: true, sel: n === 1 })} aria-label="幻灯片 ${n}"><span></span></button></li>`)}
              </ol>
              <div class="vs">${scroll("up")}<div class="knob long"></div><span class="end">${scroll("down")}</span></div>
            </div>
            <div class="views">
              <button class="v on" aria-label="Normal">${icon("normal")}</button>
              <button class="v" aria-label="Sorter">${icon("sorter")}</button>
              <button class="v" aria-label="Show">${icon("show")}</button>
              <div class="hs">${scroll("left", true)}${scroll("right", true)}</div>
            </div>
          </aside>

          <main class="main">
            <div class="stage">
              <div class="canvas"><div class="slide"></div></div>
              <div class="vs">
                ${scroll("up")}<div class="knob short"><i></i></div>
                <span class="end">${scroll("down")}</span>
                <div class="pager">
                  ${this.pageButton("M0 4l3.500-4L7 4zM0 9l3.500-4L7 9z", "Previous slide")}
                  ${this.pageButton("M0 0h7L3.500 4zM0 5h7L3.500 9z", "Next slide")}
                </div>
              </div>
            </div>
            <div class="hrow">${scroll("right", true)}</div>
            <div class="notes">
              <textarea aria-label="备注" .value=${"单击添加备注"}></textarea>
              <div class="vs">${scroll("up", true)}<span class="end">${scroll("down", true)}</span></div>
            </div>
          </main>
        </div>

        <div class="row draw">
          <div class="bar" role="toolbar" aria-label="绘图">
            <span class="grip"></span>
            <button class="label">绘图${key("R")}</button>${tool("v")}${tool("*pointer")}${tool("|")}
            <button class="label">自选图形${key("U")}</button>${tool("v")}
            ${drawing.map(tool)}
          </div>
        </div>

        <footer class="status">
          <span class="cell c1"></span>
          <span class="cell c2">幻灯片<span class="latin"> 1 / 5</span></span>
          <span class="cell c3">默认设</span>
        </footer>

        <div class="popup" role="menu">
          ${popup.map((g, n) => html`${n ? html`<hr />` : nothing}${g.map((i) => this.item(i))}`)}
        </div>
        <svg class="cursor" viewBox="0 0 13 21" aria-hidden="true">
          <path d="M.5 1v15.500l3.500-3.500 3 7 3-1-3-7h5z" fill="#fff" stroke="#000" />
        </svg>
        <div class="brand"><strong>office之家</strong><small>OFFICE.JB51.NET</small></div>
      </div>
    `;
  }
}
